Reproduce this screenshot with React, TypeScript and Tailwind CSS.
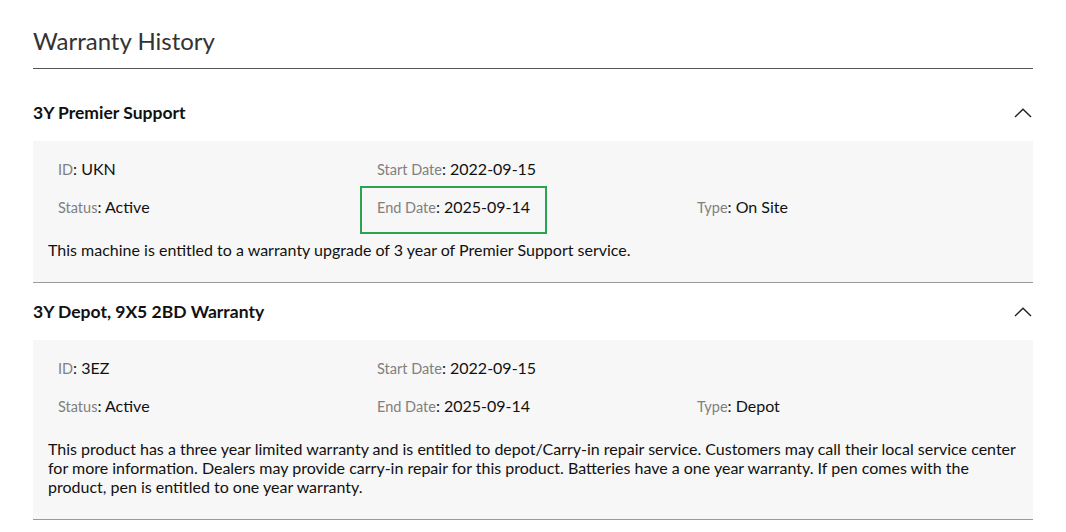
import React from 'react';

type Warranty = {
  name: string;
  id: string;
  status: string;
  start: string;
  end: string;
  type: string;
  description: string;
  highlightEnd?: boolean;
};

const warranties: Warranty[] = [
  {
    name: '3Y Premier Support',
    id: 'UKN',
    status: 'Active',
    start: '2022-09-15',
    end: '2025-09-14',
    type: 'On Site',
    description: 'This machine is entitled to a warranty upgrade of 3 year of Premier Support service.',
    highlightEnd: true,
  },
  {
    name: '3Y Depot, 9X5 2BD Warranty',
    id: '3EZ',
    status: 'Active',
    start: '2022-09-15',
    end: '2025-09-14',
    type: 'Depot',
    description:
      'This product has a three year limited warranty and is entitled to depot/Carry-in repair service. Customers may call their local service center for more information. Dealers may provide carry-in repair for this product. Batteries have a one year warranty. If pen comes with the product, pen is entitled to one year warranty.',
  },
];

const Field: React.FC<{ label: string; value: string }> = ({ label, value }) => (
  <div className="text-[16px] leading-[22px] whitespace-nowrap">
    <span className="text-[14.5px] text-[#808080]">{label}</span>
    <span className="text-[#111]">: {value}</span>
  </div>
);

const ChevronUp = () => (
  <svg width="18" height="10" viewBox="0 0 18 10" fill="none" className="mr-[1px]">
    <path d="M1 9L9 1.2L17 9" stroke="#222" strokeWidth="1.4" />
  </svg>
);

const Section: React.FC<{ w: Warranty }> = ({ w }) => (
  <div className="border-b border-[#9a9a9a]">
    <div className="flex items-center justify-between pt-[17px] pb-[16px]">
      <h2 className="text-[17.5px] leading-[24px] font-bold text-[#111]">{w.name}</h2>
      <ChevronUp />
    </div>
    <div className="bg-[#f7f7f7] pl-[15px] pr-[15px] pt-[17px] pb-[23px]">
      <div className="grid grid-cols-[319px_320px_1fr] gap-y-[15px] pl-[10px]">
        <Field label="ID" value={w.id} />
        <Field label="Start Date" value={w.start} />
        <div />
        <Field label="Status" value={w.status} />
        <div className="relative">
          <Field label="End Date" value={w.end} />
          {w.highlightEnd && (
            <div className="absolute left-[-17px] top-[-10px] w-[187px] h-[48px] border-[2px] border-[#2ea34f]" />
          )}
        </div>
        <Field label="Type" value={w.type} />
      </div>
      <p className="mt-[21px] text-[16px] leading-[19px] text-[#111]">{w.description}</p>
    </div>
  </div>
);

export default function App() {
  return (
    <div
      className="min-h-[532px] bg-white px-[33px] pt-[26px]"
      style={{ fontFamily: 'Lato, "Open Sans", sans-serif' }}
    >
      <h1 className="text-[24px] leading-[29px] text-[#333] pb-[13px] border-b border-[#555]">
        Warranty History
      </h1>
      <div className="mt-[15px]">
        {warranties.map((w) => (
          <Section key={w.name} w={w} />
        ))}
      </div>
    </div>
  );
}
